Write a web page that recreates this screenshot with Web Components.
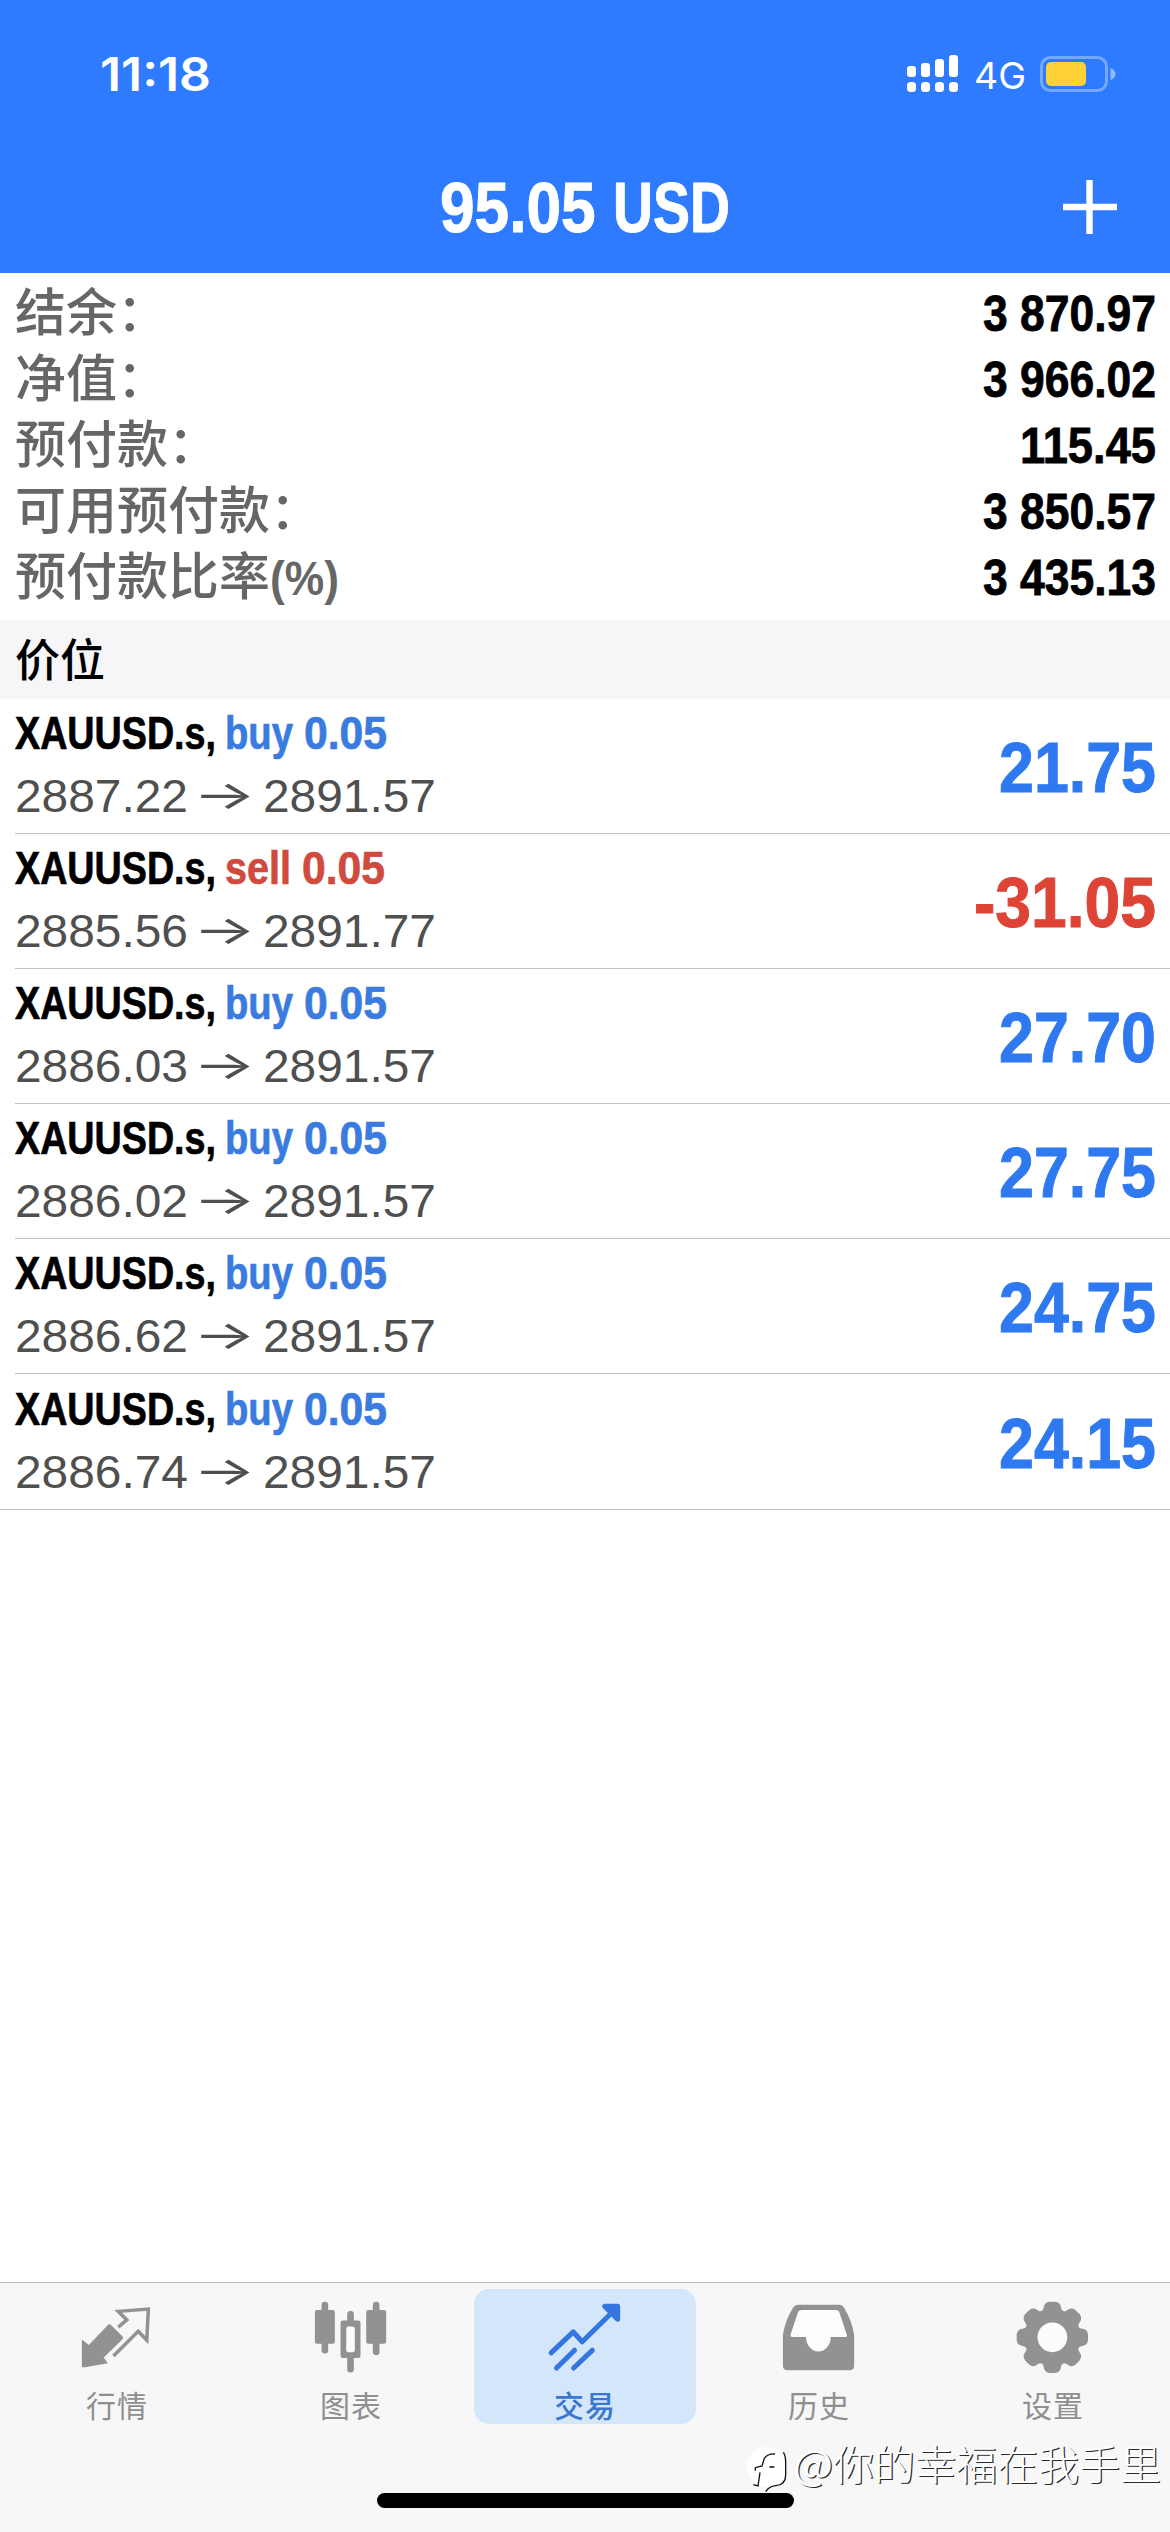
<!DOCTYPE html>
<html lang="zh-CN">
<head>
<meta charset="utf-8">
<title>交易</title>
<style>
html,body{margin:0;padding:0;background:#fff}
body{width:1170px;height:2532px;overflow:hidden;font-family:"Liberation Sans","Noto Sans CJK SC",sans-serif}
</style>
</head>
<body>
<trade-app></trade-app>
<script>
/* One line of text condensed or widened horizontally to a given advance width. */
class FitText extends HTMLElement{
  connectedCallback(){
    if(!this.shadowRoot){
      this.attachShadow({mode:'open'}).innerHTML=`<style>
        :host{display:block;flex:none;white-space:pre}
        span{display:inline-block;transform-origin:0 50%}
      </style><span><slot></slot></span>`;
    }
    const s=this.shadowRoot.querySelector('span'),w=+this.getAttribute('w');
    this.style.width=w+'px';
    const n=s.getBoundingClientRect().width;
    if(n)s.style.transform=`scaleX(${w/n})`;
  }
}

class StatusBar extends HTMLElement{
  connectedCallback(){
    this.attachShadow({mode:'open'}).innerHTML=`<style>
      :host{display:flex;align-items:center;height:148px;padding:0 54px 0 100px;color:#fff;font-family:Inter,"Noto Sans",sans-serif;box-sizing:border-box}
      .time{font-size:46px;font-weight:600;line-height:60px;margin-right:auto}
      .net{font-size:37px;line-height:48px;margin:4px 14px 0 15px}
      svg{display:block;flex:none}
    </style>
    <fit-text class="time" w="111">11:18</fit-text>
    <svg width="52" height="38" viewBox="0 0 52 38" fill="#fff">
      <rect x="0" y="11" width="9" height="11" rx="3"/><rect x="14" y="8" width="9" height="14" rx="3"/><rect x="28" y="4" width="9" height="18" rx="3"/><rect x="42" y="0" width="9" height="22" rx="3"/>
      <rect x="0" y="27" width="9" height="10" rx="3.5"/><rect x="14" y="27" width="9" height="10" rx="3.5"/><rect x="28" y="27" width="9" height="10" rx="3.5"/><rect x="42" y="27" width="9" height="10" rx="3.5"/>
    </svg>
    <fit-text class="net" w="52">4G</fit-text>
    <svg width="76" height="36" viewBox="0 0 76 36">
      <rect x="1.5" y="1.5" width="65" height="33" rx="9" fill="none" stroke="#74a9ff" stroke-width="3"/>
      <rect x="6" y="6" width="40" height="24" rx="5" fill="#fed136"/>
      <path d="M70.500 12q5 2 5 6t-5 6z" fill="#8fbcff"/>
    </svg>`;
  }
}

class TitleBar extends HTMLElement{
  connectedCallback(){
    this.attachShadow({mode:'open'}).innerHTML=`<style>
      :host{display:grid;grid-template-columns:1fr auto 1fr;align-items:center;height:118px;padding:0 53px;color:#fff}
      .t{grid-column:2;display:flex;font-size:71px;font-weight:700;line-height:80px;-webkit-text-stroke:1px #fff;padding-top:2px}
      svg{justify-self:end;display:block}
    </style>
    <div class="t"><fit-text w="173">95.05 </fit-text><fit-text w="117">USD</fit-text></div>
    <svg width="54" height="54" viewBox="0 0 54 54"><path d="M0 27H54M26.500 0V54" stroke="#fff" stroke-width="6.400"/></svg>`;
  }
}

class SummaryRow extends HTMLElement{
  connectedCallback(){
    const l=this.getAttribute('label'),suf=this.getAttribute('suffix');
    this.attachShadow({mode:'open'}).innerHTML=`<style>
      :host{display:flex;align-items:center;height:66px;padding:0 14px 0 15px}
      .l{display:flex;align-items:center;color:#666;font:500 51px/66px "Liberation Sans","Noto Sans CJK SC",sans-serif;margin-right:auto}
      .l span{padding-top:1px;height:65px;line-height:65px}
      .s{font:700 49px/66px "Liberation Sans",sans-serif;padding-top:2px}
      .v{font:700 50px/66px "Liberation Sans",sans-serif;color:#000;-webkit-text-stroke:.8px #000;padding-top:2px}
    </style>
    <div class="l"><span>${l}</span>${suf?`<fit-text class="s" w="69">${suf}</fit-text>`:''}</div>
    <fit-text class="v" w="${this.getAttribute('w')||173}">${this.getAttribute('value')}</fit-text>`;
  }
}

class SectionHeader extends HTMLElement{
  connectedCallback(){
    this.attachShadow({mode:'open'}).innerHTML=`<style>
      :host{display:flex;height:79px;padding:0 15px;background:#f6f6f8;color:#000;font:500 45px/76px "Noto Sans CJK SC",sans-serif}
    </style><slot></slot>`;
  }
}

class PositionRow extends HTMLElement{
  connectedCallback(){
    const a=n=>this.getAttribute(n),sell=a('side')==='sell';
    this.attachShadow({mode:'open'}).innerHTML=`<style>
      :host{display:flex;height:135px;padding-left:15px;box-sizing:border-box}
      :host([last]){height:136px;padding-left:0}
      .row{flex:1;display:flex;align-items:center;border-bottom:1px solid #c2c2c5;padding-right:14px}
      :host([last]) .row{padding-left:15px}
      .info{display:flex;flex-direction:column;margin-right:auto;margin-bottom:4px}
      .a,.b{display:flex;align-items:center;height:63px;font-size:47px;line-height:63px}
      .a{font-weight:700;color:#000;-webkit-text-stroke:.7px currentColor}
      .side{margin-left:9px}
      .vol{margin-left:11px}
      .side,.vol{color:${sell?'#d04a3e':'#3a7bdf'};-webkit-text-stroke:.7px ${sell?'#d04a3e':'#3a7bdf'}}
      .b{color:#4f4f4f}
      .ar{font-family:Inter,"DejaVu Sans",sans-serif;font-weight:400;font-size:40px;margin:-2px 7px 0 5px}
      .pl{font-size:71px;font-weight:700;line-height:80px;padding-top:4px;color:${sell?'#dd4436':'#2f79f0'};-webkit-text-stroke:1px ${sell?'#dd4436':'#2f79f0'}}
    </style>
    <div class="row">
      <div class="info">
        <div class="a"><fit-text w="201">XAUUSD.s,</fit-text><fit-text class="side" w="${sell?66:68}">${a('side')}</fit-text><fit-text class="vol" w="83">0.05</fit-text></div>
        <div class="b"><fit-text w="173">${a('open')}</fit-text><fit-text class="ar" w="63">→</fit-text><fit-text w="173">${a('price')}</fit-text></div>
      </div>
      <fit-text class="pl" w="${sell?182:157}">${a('pl')}</fit-text>
    </div>`;
  }
}

const gear=(()=>{
  const cx=1057,cy=238,p=(r,d)=>{const t=d*Math.PI/180;return (cx+r*Math.sin(t)).toFixed(1)+' '+(cy-r*Math.cos(t)).toFixed(1)};
  let s='M'+p(91,-19);
  for(let i=0;i<8;i++){const c=i*45;s+=`L${p(105,-14+c)}Q${p(113,-11+c)} ${p(113,-5+c)}L${p(113,5+c)}Q${p(113,11+c)} ${p(105,14+c)}L${p(93,18+c)}Q${p(86,22.5+c)} ${p(93,27+c)}`}
  return s+'Z';
})();
const ICONS={
  quotes:{cx:351,art:`<path d="M322 199q5-5 10 0l36 36q5 5 0 10L309 302l13 18-76 13-6-2V245l22 17z" fill="#929292"/><path d="M355 206l27-23-27-27 95-7-5 98-27-28-78 78" fill="none" stroke="#929292" stroke-width="11"/>`},
  chart:{cx:1053,art:`<g fill="#929292"><rect x="939" y="152" width="63" height="106" rx="7"/><rect x="960" y="126" width="21" height="163" rx="10"/><rect x="1101" y="152" width="63" height="106" rx="7"/><rect x="1122" y="126" width="21" height="168" rx="10"/><rect x="1020" y="185" width="63" height="118" rx="7"/><rect x="1041" y="155" width="21" height="194" rx="10"/></g><rect x="1038" y="204" width="27" height="81" rx="7" fill="#fcfcfc"/>`},
  trade:{cx:375,art:`<g fill="none" stroke="#3475e0" stroke-width="16" stroke-linecap="round" stroke-linejoin="round"><path d="M268 287l70-66 28 31L474 146"/><path d="M285 335l57-56M339 335l59-56"/><path d="M437 140h41v41z" fill="#3475e0"/></g>`},
  history:{cx:357,art:`<path d="M291 135H422q9 0 13 8C452 170 463 199 468 230V327q0 15-15 15H258q-15 0-15-15V230C248 199 259 170 276 143q5-8 15-8z" fill="#929292"/><path d="M303 152H410q9 0 12 9L445 231q2 6-5 6H394a39 46 0 0 1-78 0H274q-9 0-7-7L290 161q3-9 13-9z" fill="#fdfdfd"/>`},
  settings:{cx:1059,art:`<path d="${gear}" fill="#929292"/><circle cx="1057" cy="238" r="47" fill="#fcfcfc"/>`}
};

class TabItem extends HTMLElement{
  connectedCallback(){
    const i=ICONS[this.getAttribute('icon')];
    this.attachShadow({mode:'open'}).innerHTML=`<style>
      :host{display:flex;flex:1;height:135px;margin:0 6px;flex-direction:column;align-items:center;color:#8f8f8f;border-radius:15px;box-sizing:border-box;padding-top:10px}
      :host([active]){background:#d4e6f9;color:#3a78d0}
      svg{display:block}
      .l{font:400 30px/40px "Noto Sans CJK SC",sans-serif;letter-spacing:1px;margin-top:9px}
      :host([active]) .l{font-weight:500}
    </style><svg width="80" height="80" viewBox="${i.cx-120} 117 240 240">${i.art}</svg><div class="l"><slot></slot></div>`;
  }
}

class TabBar extends HTMLElement{
  connectedCallback(){
    this.attachShadow({mode:'open'}).innerHTML=`<style>
      :host{display:flex;flex-direction:column;align-items:center;height:250px;margin-top:auto;background:#f7f7f7;border-top:1px solid #b9b9bc;box-sizing:border-box}
      nav{display:flex;align-self:stretch;padding-top:6px}
      .home{width:417px;height:15px;border-radius:8px;background:#000;margin-top:69px}
    </style><nav><slot></slot></nav><div class="home"></div>`;
  }
}

class WaterMark extends HTMLElement{
  connectedCallback(){
    this.attachShadow({mode:'open'}).innerHTML=`<style>
      :host{position:absolute;right:9px;bottom:40px;display:flex;align-items:center;color:#fff;font:300 41px/60px "Noto Sans CJK SC",sans-serif;text-shadow:1.200px 1.200px 0 #2a2a2a}
      svg{display:block;align-self:flex-end;margin:0 2px -3px 0}
      .at{font-weight:400}
    </style>
    <svg width="44" height="48" viewBox="0 0 132 144"><circle cx="60" cy="60" r="60" fill="#fff"/><path d="M84 21Q64 19 52 34L45 57 25 62V71M39 76L33 117 19 113M67 60h15M109 16q7 10 7 30v38q0 30-30 32-20 2-30 18" fill="none" stroke="#111" stroke-width="4"/></svg>
    <fit-text class="at" w="40">@</fit-text><fit-text w="328"><slot></slot></fit-text>`;
  }
}

class TradeApp extends HTMLElement{
  connectedCallback(){
    this.attachShadow({mode:'open'}).innerHTML=`<style>
      :host{display:flex;flex-direction:column;position:relative;width:1170px;height:2532px;background:#fff;overflow:hidden}
      header{height:273px;background:#2e7bff}
      .sum{padding:7px 0 10px}
    </style>
    <header><status-bar></status-bar><title-bar></title-bar></header>
    <section class="sum">
      <summary-row label="结余：" value="3 870.97"></summary-row>
      <summary-row label="净值：" value="3 966.02"></summary-row>
      <summary-row label="预付款：" value="115.45" w="136"></summary-row>
      <summary-row label="可用预付款：" value="3 850.57"></summary-row>
      <summary-row label="预付款比率" suffix="(%)" value="3 435.13"></summary-row>
    </section>
    <section-header>价位</section-header>
    <main>
      <position-row side="buy" open="2887.22" price="2891.57" pl="21.75"></position-row>
      <position-row side="sell" open="2885.56" price="2891.77" pl="-31.05"></position-row>
      <position-row side="buy" open="2886.03" price="2891.57" pl="27.70"></position-row>
      <position-row side="buy" open="2886.02" price="2891.57" pl="27.75"></position-row>
      <position-row side="buy" open="2886.62" price="2891.57" pl="24.75"></position-row>
      <position-row last side="buy" open="2886.74" price="2891.57" pl="24.15"></position-row>
    </main>
    <tab-bar>
      <tab-item icon="quotes">行情</tab-item>
      <tab-item icon="chart">图表</tab-item>
      <tab-item icon="trade" active>交易</tab-item>
      <tab-item icon="history">历史</tab-item>
      <tab-item icon="settings">设置</tab-item>
    </tab-bar>
    <water-mark>你的幸福在我手里</water-mark>`;
  }
}

customElements.define('fit-text',FitText);
customElements.define('status-bar',StatusBar);
customElements.define('title-bar',TitleBar);
customElements.define('summary-row',SummaryRow);
customElements.define('section-header',SectionHeader);
customElements.define('position-row',PositionRow);
customElements.define('tab-item',TabItem);
customElements.define('tab-bar',TabBar);
customElements.define('water-mark',WaterMark);
customElements.define('trade-app',TradeApp);
</script>
</body>
</html>
